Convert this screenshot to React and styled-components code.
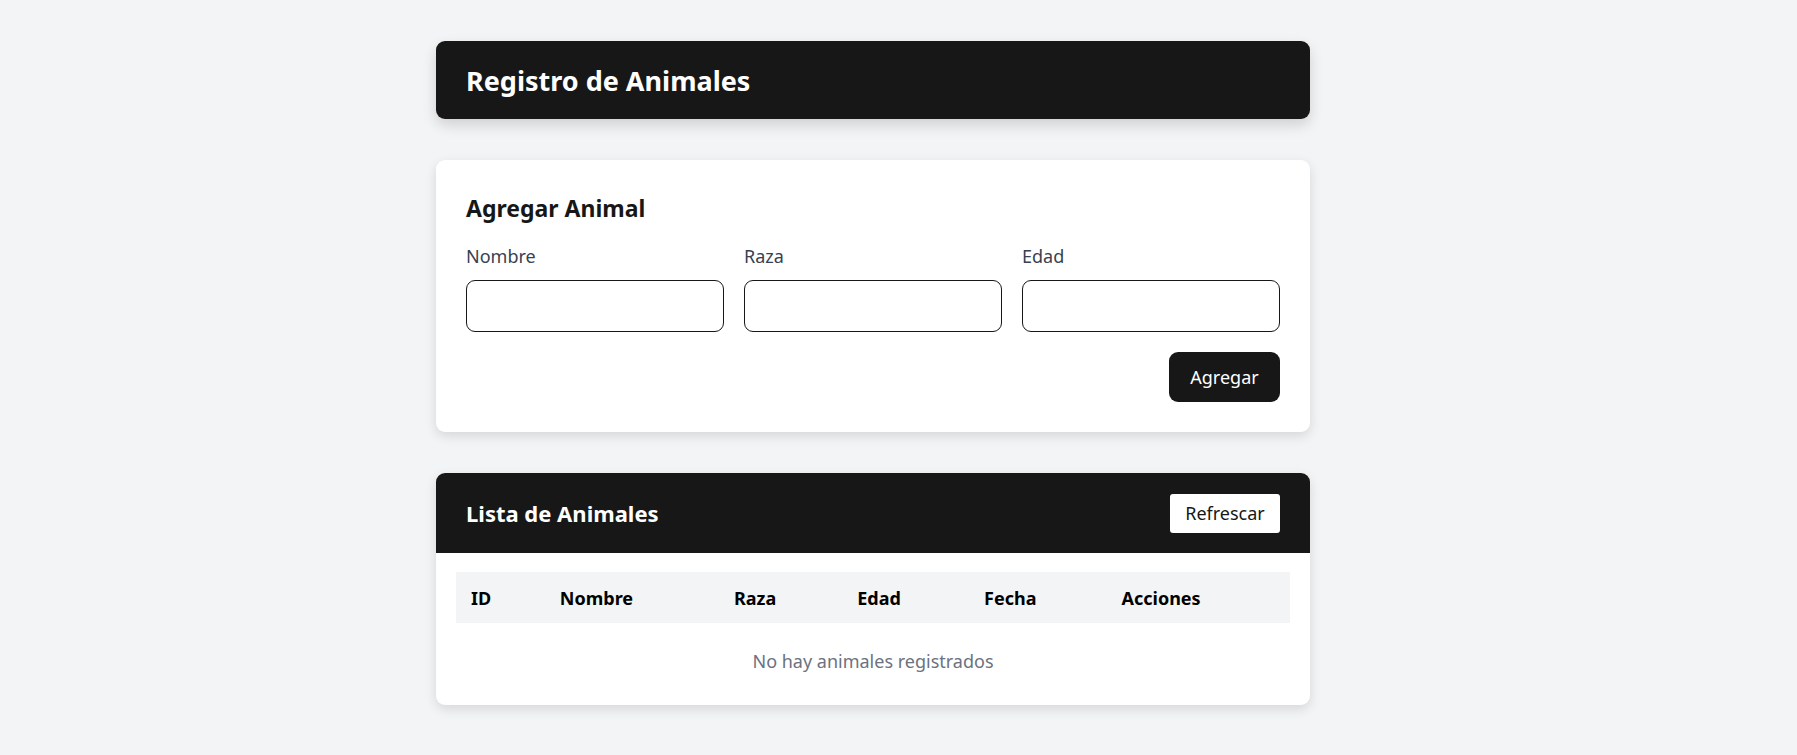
import React from "react";
import styled, { createGlobalStyle } from "styled-components";

const Global = createGlobalStyle`
  body { margin: 0; background: #f3f4f6; font-family: "Noto Sans", "Open Sans", sans-serif; color: #171717; }
`;

const Page = styled.div`
  width: 874px;
  margin-left: 436px;
  padding: 41px 0 38px;
  display: flex;
  flex-direction: column;
  gap: 41px;
`;

const Card = styled.section`
  background: #fff;
  border-radius: 9px;
  box-shadow: 0 4px 12px rgba(0,0,0,0.12);
  overflow: hidden;
`;

const DarkBar = styled.div`
  background: #171717;
  color: #fff;
  height: ${p => p.$h}px;
  padding: 0 30px;
  display: flex;
  align-items: center;
  justify-content: space-between;
  border-radius: ${p => (p.$solo ? "9px" : "0")};
  box-shadow: ${p => (p.$solo ? "0 6px 14px rgba(0,0,0,0.15)" : "none")};
`;

const H1 = styled.h1`margin: 0; font-size: 27px; font-weight: 700;`;
const H2 = styled.h2`margin: 0; font-size: ${p => p.$size || 23}px; font-weight: 700;`;

const FormBody = styled.div`
  padding: 32px 30px 30px;
`;

const Fields = styled.div`
  display: grid;
  grid-template-columns: repeat(3, 1fr);
  gap: 20px;
  margin-top: 20px;
`;

const Field = styled.label`
  display: flex;
  flex-direction: column;
  gap: 12px;
  font-size: 18px;
  color: #374151;
`;

const Input = styled.input`
  height: 52px;
  box-sizing: border-box;
  border: 1.5px solid #171717;
  border-radius: 9px;
  font-size: 18px;
  padding: 0 12px;
`;

const Actions = styled.div`
  display: flex;
  justify-content: flex-end;
  margin-top: 20px;
`;

const Button = styled.button`
  font-family: inherit;
  font-size: 18px;
  border: none;
  border-radius: ${p => (p.$light ? 3 : 9)}px;
  background: ${p => (p.$light ? "#fff" : "#171717")};
  color: ${p => (p.$light ? "#171717" : "#fff")};
  width: ${p => (p.$light ? 110 : 111)}px;
  height: ${p => (p.$light ? 39 : 50)}px;
`;

const TableWrap = styled.div`padding: 19px 20px 28px;`;

const Table = styled.table`
  width: 100%;
  border-collapse: collapse;
  font-size: 18px;
`;

const Th = styled.th`
  text-align: left;
  background: #f3f4f6;
  height: 51px;
  padding: 0 0 0 15px;
  font-weight: 700;
  color: #000;
  width: ${p => p.$w}px;
`;

const Empty = styled.td`
  text-align: center;
  color: #6b7280;
  padding-top: 23px;
  height: 30px;
`;

export default function App() {
  const cols = [["ID", 85], ["Nombre", 177], ["Raza", 122], ["Edad", 126], ["Fecha", 137], ["Acciones", 187]];
  return (
    <>
      <Global />
      <Page>
        <DarkBar $h={78} $solo><H1>Registro de Animales</H1></DarkBar>
        <Card>
          <FormBody>
            <H2>Agregar Animal</H2>
            <Fields>
              <Field>Nombre<Input /></Field>
              <Field>Raza<Input /></Field>
              <Field>Edad<Input /></Field>
            </Fields>
            <Actions><Button>Agregar</Button></Actions>
          </FormBody>
        </Card>
        <Card>
          <DarkBar $h={80}>
            <H2 $size={22}>Lista de Animales</H2>
            <Button $light>Refrescar</Button>
          </DarkBar>
          <TableWrap>
            <Table>
              <thead>
                <tr>{cols.map(([c, w]) => <Th key={c} $w={w}>{c}</Th>)}</tr>
              </thead>
              <tbody>
                <tr><Empty colSpan={6}>No hay animales registrados</Empty></tr>
              </tbody>
            </Table>
          </TableWrap>
        </Card>
      </Page>
    </>
  );
}
